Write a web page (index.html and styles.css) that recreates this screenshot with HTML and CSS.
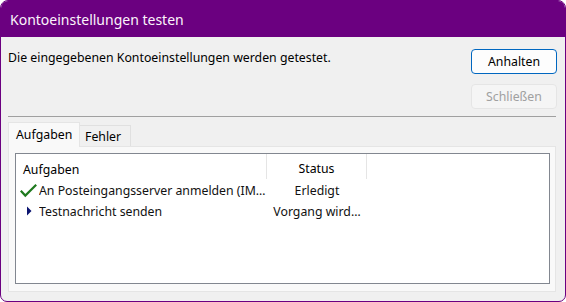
FILE: index.html
```html
<!DOCTYPE html>
<html lang="de">
<head>
<meta charset="utf-8">
<title>Kontoeinstellungen testen</title>
<link rel="stylesheet" href="styles.css">
</head>
<body>
<div class="window">
  <div class="titlebar">Kontoeinstellungen testen</div>
  <div class="content">
    <div class="top">
      <div class="message">Die eingegebenen Kontoeinstellungen werden getestet.</div>
      <div class="buttons">
        <button class="btn btn-default">Anhalten</button>
        <button class="btn btn-disabled" disabled>Schließen</button>
      </div>
    </div>
    <div class="separator"></div>
    <div class="tabs">
      <div class="tab tab-active">Aufgaben</div>
      <div class="tab">Fehler</div>
    </div>
    <div class="pane">
      <div class="listbox">
        <div class="row header">
          <div class="cell c1">Aufgaben</div>
          <div class="cell c2">Status</div>
        </div>
        <div class="row item">
          <div class="cell c1">
            <span class="icon">
              <svg width="18" height="14" viewBox="0 0 18 14"><path d="M0.8 6.8 L5.3 11.6 L16.2 0.8" fill="none" stroke="#1f7a1f" stroke-width="2.2"/></svg>
            </span>
            <span class="text">An Posteingangsserver anmelden (IM…</span>
          </div>
          <div class="cell c2">Erledigt</div>
        </div>
        <div class="row item">
          <div class="cell c1">
            <span class="icon">
              <svg width="18" height="14" viewBox="0 0 18 14"><path d="M7 1.5 L11.5 6 L7 10.5 Z" fill="#0b1470"/></svg>
            </span>
            <span class="text">Testnachricht senden</span>
          </div>
          <div class="cell c2">Vorgang wird…</div>
        </div>
      </div>
    </div>
  </div>
</div>
</body>
</html>
```
FILE: styles.css
```css
* { box-sizing: border-box; }
html, body {
  margin: 0;
  padding: 0;
  background: #ffffff;
}
body {
  font-family: "Noto Sans", "Liberation Sans", sans-serif;
  font-size: 12.3px;
  color: #000;
}
.window {
  width: 566px;
  height: 302px;
  border: 1px solid #6b0080;
  border-radius: 8px 8px 7px 7px;
  background: #f0f0f0;
  overflow: hidden;
  display: flex;
  flex-direction: column;
}
.titlebar {
  background: #6b0080;
  color: #fbf4fb;
  font-size: 14px;
  line-height: 36px;
  padding-left: 10px;
  margin: -1px -1px 0 -1px;
  padding-top: 2px;
  height: 37px;
}
.content {
  padding: 12px 8px 0 7px;
  display: flex;
  flex-direction: column;
}
.top {
  display: flex;
  justify-content: space-between;
}
.message {
  margin-top: 1px;
  line-height: 16px;
}
.buttons {
  display: flex;
  flex-direction: column;
  gap: 10px;
  width: 86px;
}
.btn {
  height: 25px;
  width: 86px;
  font: inherit;
  border-radius: 4px;
  padding: 0;
}
.btn-default {
  background: #fdfdfd;
  border: 1px solid #0067c0;
  color: #000;
}
.btn-disabled {
  background: #f5f5f5;
  border: 1px solid #e5e5e5;
  color: #a0a0a0;
}
.separator {
  margin-top: 7px;
  height: 1px;
  background: #a0a0a0;
  margin-right: 1px;
}
.tabs {
  margin-top: 5px;
  display: flex;
  align-items: flex-end;
  height: 24px;
  position: relative;
  z-index: 1;
}
.tab {
  height: 21px;
  padding: 0 9px 0 5px;
  border: 1px solid #e0e0e0;
  border-bottom: none;
  background: #f0f0f0;
  line-height: 21px;
  margin-left: -1px;
}
.tab-active {
  height: 25px;
  margin-left: 0;
  margin-bottom: -1px;
  padding: 0 7px 0 7px;
  background: #f9f9f9;
  border-color: #e5e5e5;
  line-height: 24px;
  width: 72px;
  position: relative;
  z-index: 2;
}
.pane {
  margin-right: 1px;
  height: 146px;
  border: 1px solid #e5e5e5;
  background: #f9f9f9;
  padding: 6px 5px 7px 6px;
}
.listbox {
  height: 131px;
  border: 1px solid #828790;
  background: #fff;
}
.row {
  display: flex;
}
.header {
  height: 26px;
}
.header .cell {
  padding-top: 7px;
  line-height: 16px;
  border-right: 1px solid #e5e5e5;
  height: 25px;
}
.header .c1 {
  padding-left: 7px;
}
.item {
  height: 21px;
  line-height: 21px;
  color: #111;
}
.cell.c1 {
  width: 251px;
  display: flex;
  align-items: center;
  white-space: nowrap;
  overflow: hidden;
}
.cell.c2 {
  width: 100px;
  text-align: center;
  white-space: nowrap;
}
.text {
  overflow: hidden;
  text-overflow: ellipsis;
}
.icon {
  flex: none;
  width: 23px;
  height: 21px;
  padding-left: 4px;
  display: flex;
  align-items: center;
}
.icon svg { display: block; }
```
